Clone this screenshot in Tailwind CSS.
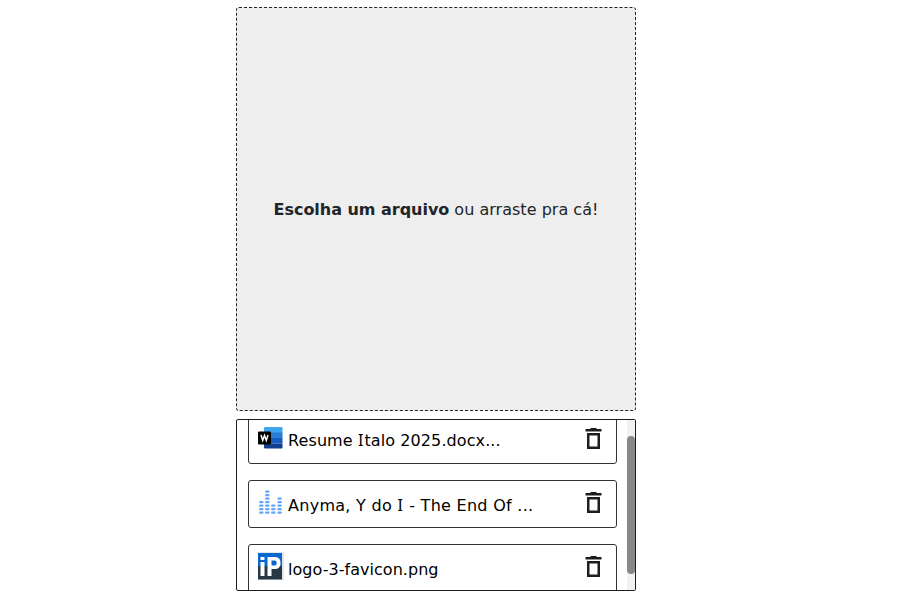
<!DOCTYPE html>
<html lang="pt-BR">
<head>
<meta charset="utf-8">
<title>Upload</title>
<script src="https://cdn.jsdelivr.net/npm/@tailwindcss/browser@4"></script>
</head>
<body class="h-[606px] overflow-hidden bg-white pt-[7px] pl-[236px] font-['DejaVu_Sans',sans-serif] text-base leading-6 text-black">
<svg class="hidden">
  <symbol id="trash" viewBox="0 0 18 24">
    <path fill="#1a1e21" d="M6.500 1h6v1h5v2.400h-16V2h5zM3 6h13v16H3zM5.500 8.500v11h8v-11z" fill-rule="evenodd"/>
  </symbol>
</svg>
<main class="flex w-[400px] flex-col gap-2">
  <label class="flex h-[404px] items-center justify-center rounded-[3px] border border-dashed border-[#212529] bg-[#eee] pt-px text-[#212529]">
    <span class="whitespace-pre"><b class="tracking-[-0.03px]">Escolha um arquivo</b><span class="tracking-[0.02px]"> ou arraste pra cá!</span></span>
  </label>
  <section class="flex h-[172px] overflow-hidden rounded-[2px] border border-[#1a1e21]">
    <ul class="-mt-[5px] flex w-[390px] flex-col gap-4 pr-[10px] pl-[11px]">
      <li class="flex h-[49px] shrink-0 items-center rounded-[3px] border border-[#303438] pl-2">
        <svg class="size-[28px] shrink-0 -translate-x-px -translate-y-[2px]" viewBox="0 0 28 28">
          <path fill="#41a5ee" d="M9 3h16.500a1 1 0 0 1 1 1v5H8V4a1 1 0 0 1 1-1z"/><path fill="#2b7cd3" d="M8 8.500h18.500v6H8z"/><path fill="#185abd" d="M8 14h18.500v5.500H8z"/><path fill="#103f91" d="M8 19.500h18.500v4a1 1 0 0 1-1 1H9a1 1 0 0 1-1-1z"/>
          <rect x="2" y="7.500" width="13" height="13" rx="1" fill="#000"/><path d="M5 11l1.700 5.500 1.800-5 1.800 5L12 11" fill="none" stroke="#fff" stroke-width="1.500"/>
        </svg>
        <span class="ml-[3px] grow pt-[3px] tracking-[0.1px]">Resume <span class="font-['Noto_Sans',sans-serif] leading-none tracking-[1px]">I</span>talo 2025.docx...</span>
        <svg class="mr-[14px] h-6 w-[18px] -translate-y-px"><use href="#trash"/></svg>
      </li>
      <li class="flex h-[48px] shrink-0 items-center rounded-[3px] border border-[#303438] pl-2">
        <svg class="size-[28px] shrink-0 -translate-y-px" viewBox="0 0 28 28" fill="none" stroke="#65a5fa" stroke-width="2.300" stroke-linecap="round">
          <path d="M3.200 13.200h2.200M3.200 16.700h2.200M3.200 20.200h2.200M3.200 23.700h2.200M9.200 2.700h2.200M9.200 6.200h2.200M9.200 9.700h2.200M9.200 13.200h2.200M9.200 16.700h2.200M9.200 20.200h2.200M9.200 23.700h2.200M15.200 16.700h2.200M15.200 20.200h2.200M15.200 23.700h2.200M21.500 9.700h2.200M21.500 13.200h2.200M21.500 16.700h2.200M21.500 20.200h2.200M21.500 23.700h2.200"/>
        </svg>
        <span class="ml-[3px] grow pt-[3px] tracking-[0.28px]">Anyma, Y do <span class="font-['Noto_Sans',sans-serif] leading-none tracking-[1px]">I</span> - The End Of ...</span>
        <svg class="mr-[14px] h-6 w-[18px] -translate-y-px"><use href="#trash"/></svg>
      </li>
      <li class="flex h-[49px] shrink-0 items-center rounded-[3px] border border-[#303438] pl-2">
        <svg class="size-[28px] shrink-0 -translate-y-[3px]" viewBox="0 0 28 28">
          <path fill="#e5e7e9" d="M1 0h26v28H1z"/><path fill="#0868d0" d="M1 1h24v13H1z"/><path fill="#263746" d="M1 14h24v13.500H1z"/>
          <path fill="#fff" d="M3.500 5h4v3h-4zM3.500 10h4v14h-4z"/><path fill="#fff" fill-rule="evenodd" d="M10.500 5h7c4 0 6 2 6 6s-2 6-6 6h-3v7h-4zM14.500 8.500v5h3c1.500 0 2.200-.8 2.200-2.500s-.7-2.500-2.200-2.500z"/>
        </svg>
        <span class="ml-[3px] grow pt-[3px] tracking-[0.04px]">logo-3-favicon.png</span>
        <svg class="mr-[14px] h-6 w-[18px] -translate-y-[2px]"><use href="#trash"/></svg>
      </li>
    </ul>
    <div class="w-2 shrink-0 bg-[#f1f1f1] pt-4"><div class="h-[138px] rounded-full bg-[#868889]"></div></div>
  </section>
</main>
</body>
</html>
